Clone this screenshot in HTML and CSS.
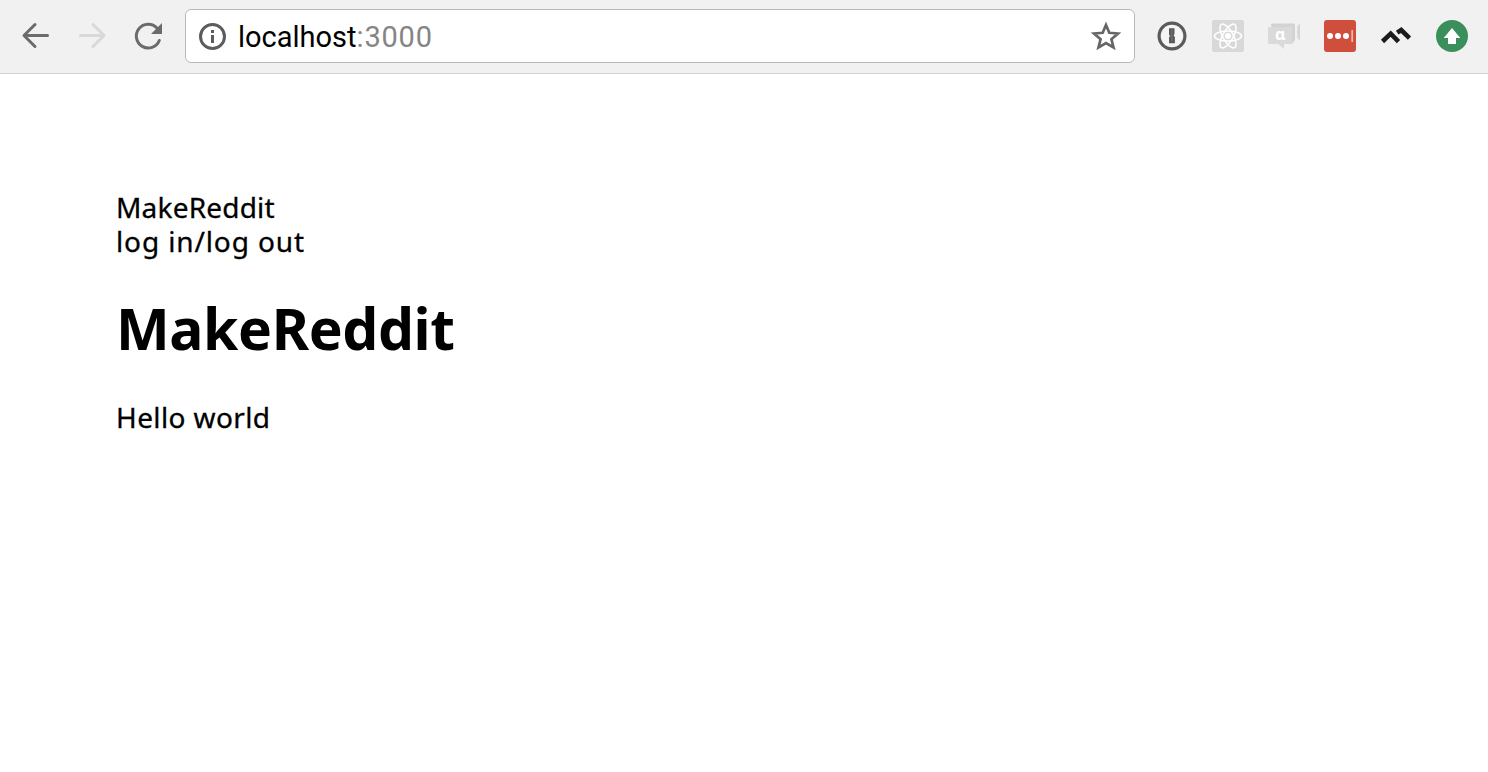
FILE: index.html
```html
<!DOCTYPE html>
<html lang="en">
<head>
<meta charset="utf-8">
<title>MakeReddit</title>
<link rel="stylesheet" href="styles.css">
</head>
<body>
<header class="toolbar">
  <nav class="nav">
    <svg class="icon dark" viewBox="0 0 32 32"><path d="M28.500 15.500H5.500M16 4.500L5 15.500L16 26.500"/></svg>
    <svg class="icon faint" viewBox="0 0 32 32"><path d="M5.500 15.500H28.500M18 4.500L29 15.500L18 26.500"/></svg>
    <svg class="icon dark" viewBox="0 0 32 32"><path d="M28.300 20.500A11.900 11.900 0 1 1 26 8"/><path class="fill" d="M31 3V14H20Z"/></svg>
  </nav>
  <div class="address">
    <svg class="info" viewBox="0 0 28 28"><circle cx="14.500" cy="14.500" r="12"/><path d="M14.500 13V21M14.500 8V11"/></svg>
    <div class="url"><span class="host">localhost</span><span class="port">:3000</span></div>
    <svg class="star" viewBox="0 0 32 32"><path d="M16 5L19.300 12.800L28 13.500L21.400 19.200L23.500 27.500L16 23.100L8.500 27.500L10.600 19.200L4 13.500L12.700 12.800Z"/></svg>
  </div>
  <div class="extensions">
    <svg viewBox="0 0 32 32"><circle cx="16" cy="16" r="12.900" fill="#f5f5f5" stroke="#5b5b5b" stroke-width="3.200"/><path d="M13 8.300H18.500V14L17.600 15.500L18.900 17V23.300H13V17.500L14 16L13 14.500Z" fill="#5b5b5b"/><path d="M15.800 10V21" stroke="#777" stroke-width=".8"/></svg>
    <svg viewBox="0 0 32 32"><rect width="32" height="32" rx="2" fill="#d8d8d8"/><g fill="none" stroke="#fff" stroke-width="1.500"><ellipse cx="16" cy="16" rx="13.500" ry="5.100"/><ellipse cx="16" cy="16" rx="13.500" ry="5.100" transform="rotate(60 16 16)"/><ellipse cx="16" cy="16" rx="13.500" ry="5.100" transform="rotate(120 16 16)"/></g><circle cx="16" cy="16" r="3" fill="#fff"/></svg>
    <svg viewBox="0 0 32 32"><path d="M3 6V5Q3 3.500 4 3.500H26Q27 3.500 27 5V20L24 24Z" fill="#d3d3d3"/><path d="M32 3.500V21L29.500 18Q28.800 12 29.500 6Z" fill="#d6d6d6"/><path d="M1 7H23Q24 7 24 8V24H16V29L10 24H1Q0 24 0 23V8Q0 7 1 7Z" fill="#dadada"/><text class="letter" x="12" y="20">ɑ</text></svg>
    <svg viewBox="0 0 32 32"><rect width="32" height="32" rx="3" fill="#d04f3c"/><g fill="#fff"><circle cx="6" cy="16" r="3"/><circle cx="14" cy="16" r="3"/><circle cx="22" cy="16" r="3"/></g><path d="M28.200 10V22" stroke="#efb9b1" stroke-width="1.700"/></svg>
    <svg viewBox="0 0 32 32"><path d="M2.500 21.500L10.700 13.700L18.500 21.700M17.200 12.700L21.200 10L29.500 18.200" fill="none" stroke="#1c1c1c" stroke-width="4.600"/></svg>
    <svg viewBox="0 0 32 32"><circle cx="16" cy="16" r="16" fill="#3b8f5b"/><path d="M16 8L24.300 18H20V24H12V18H7.700Z" fill="#fff"/></svg>
  </div>
</header>
<main class="page">
  <div class="brand">MakeReddit</div>
  <div class="session">log in/log out</div>
  <h1 class="title">MakeReddit</h1>
  <p class="message">Hello world</p>
</main>
</body>
</html>
```

FILE: styles.css
```css
* { box-sizing: border-box; }
body { margin: 0; background: #fff; color: #000; font-family: "Noto Sans", sans-serif; }
svg { display: block; flex: none; }
.toolbar { display: flex; height: 74px; padding: 9px 20px 0 19px; background: #f1f1f1; border-bottom: 1px solid #d2d2d2; }
.nav { display: flex; gap: 24px; width: 166px; padding-top: 11px; }
.icon { width: 32px; height: 32px; fill: none; stroke-width: 3; stroke-linecap: round; stroke-linejoin: round; }
.dark { stroke: #6b6b6b; }
.faint { stroke: #d9d9d9; }
.fill { fill: #6b6b6b; stroke: none; }
.address { display: flex; align-items: center; width: 950px; height: 54px; padding: 0 12px 0 13px; background: #fff; border: 1px solid #b9b9b9; border-radius: 6px; }
.info { width: 28px; height: 28px; margin-left: -1px; fill: none; stroke: #5c5c5c; stroke-width: 3; }
.url { flex: 1; padding: 2px 0 0 12px; font: 29px/52px Roboto, sans-serif; white-space: nowrap; }
.port { color: #858585; letter-spacing: .8px; }
.star { width: 32px; height: 32px; fill: none; stroke: #666; stroke-width: 2.7; }
.extensions { display: flex; gap: 24px; margin-left: 21px; padding-top: 11px; }
.extensions svg { width: 32px; height: 32px; }
.letter { font: bold 16px "Noto Sans", "DejaVu Sans", sans-serif; fill: #fff; text-anchor: middle; }
.page { padding: 116px 0 0 116px; font-size: 28px; line-height: 34px; -webkit-text-stroke: .3px #000; }
.brand { letter-spacing: .2px; }
.session { letter-spacing: .88px; }
.title { margin: 35px 0 37px; font-size: 57px; line-height: 70px; letter-spacing: -.4px; -webkit-text-stroke: 0; }
.message { margin: 0; letter-spacing: .38px; }
```
